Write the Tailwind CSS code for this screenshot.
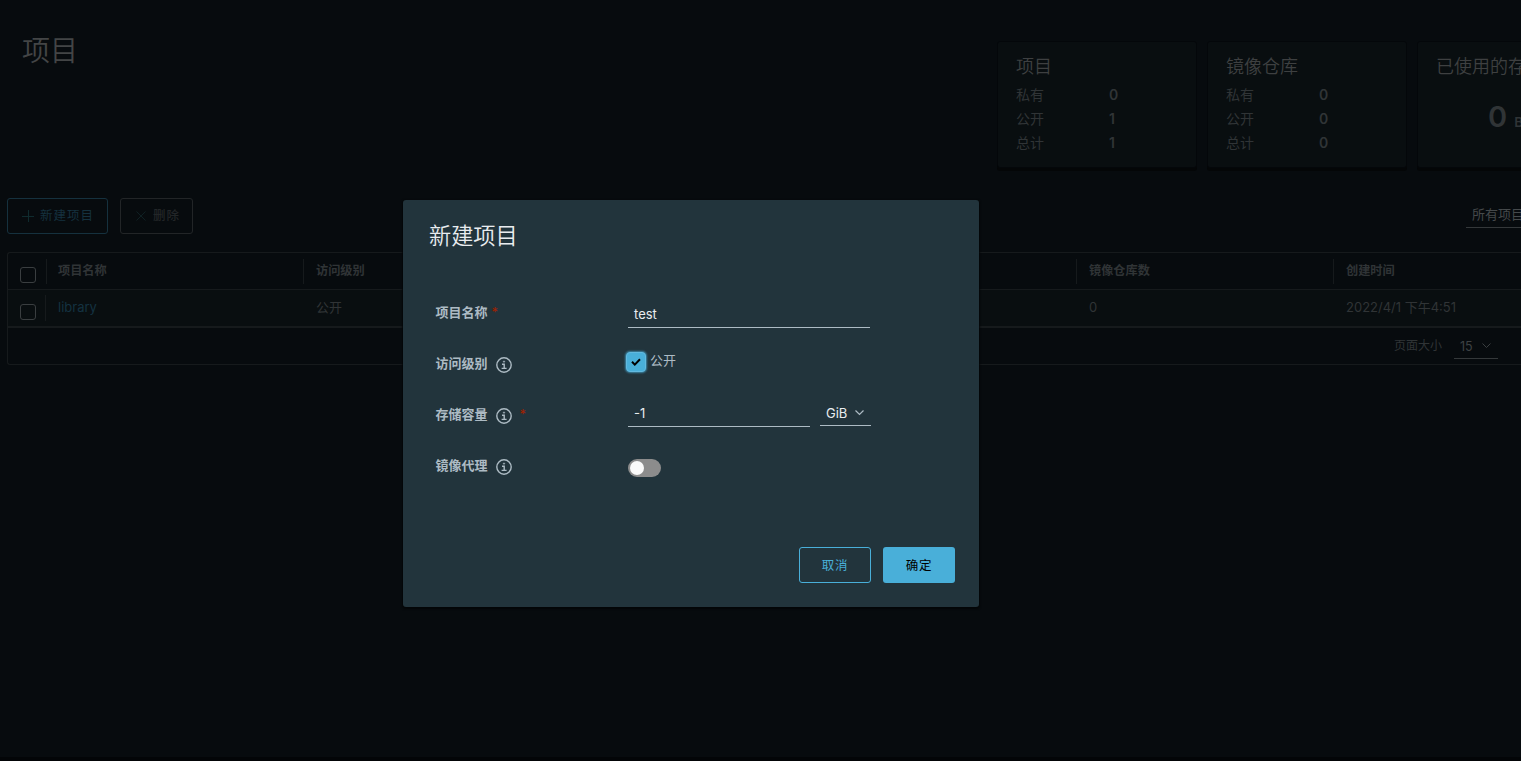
<!DOCTYPE html>
<html lang="zh-CN">
<head>
    <meta charset="UTF-8">
    <meta name="viewport" content="width=device-width, initial-scale=1.0">
    <title>项目</title>
    <script src="https://cdn.jsdelivr.net/npm/@tailwindcss/browser@4"></script>
</head>
<body class="h-screen overflow-hidden bg-[#070b0e] font-['Inter','Noto_Sans_CJK_SC',sans-serif] text-[13px] text-[#303436]">
    <div class="flex h-screen flex-col overflow-hidden border-b-4 border-[#030507] pl-[7px]">
        <!-- title and statistics -->
        <header class="flex h-[198px] shrink-0 items-start justify-between">
            <h1 class="pt-[31px] pl-[15px] text-[28px] leading-10 font-[350] text-[#434546]">项目</h1>
            <div class="flex w-[524px] shrink-0 gap-[10px] overflow-hidden pt-[41px] pb-1">
                <div class="h-[127px] w-[200px] shrink-0 rounded-[3px] border border-[#04070a] bg-[#090e10] pt-[13px] pl-[18px] shadow-[0_3px_0_#040607]">
                    <h2 class="text-lg leading-6 font-[350] text-[#3e4041]">项目</h2>
                    <dl class="grid grid-cols-[93px_1fr] pt-1 text-sm leading-6">
                        <dt>私有</dt><dd class="font-semibold">0</dd>
                        <dt>公开</dt><dd class="font-semibold">1</dd>
                        <dt>总计</dt><dd class="font-semibold">1</dd>
                    </dl>
                </div>
                <div class="h-[127px] w-[200px] shrink-0 rounded-[3px] border border-[#04070a] bg-[#090e10] pt-[13px] pl-[18px] shadow-[0_3px_0_#040607]">
                    <h2 class="text-lg leading-6 font-[350] text-[#3e4041]">镜像仓库</h2>
                    <dl class="grid grid-cols-[93px_1fr] pt-1 text-sm leading-6">
                        <dt>私有</dt><dd class="font-semibold">0</dd>
                        <dt>公开</dt><dd class="font-semibold">0</dd>
                        <dt>总计</dt><dd class="font-semibold">0</dd>
                    </dl>
                </div>
                <div class="h-[127px] w-[200px] shrink-0 rounded-[3px] border border-[#04070a] bg-[#090e10] pt-[13px] pl-[18px] whitespace-nowrap shadow-[0_3px_0_#040607]">
                    <h2 class="text-lg leading-6 font-[350] text-[#3e4041]">已使用的存储</h2>
                    <div class="flex items-baseline gap-[7px] pt-[18px] pl-[52px] font-semibold">
                        <span class="text-[29px] leading-10">0</span>
                        <span class="text-[13.5px]">Byte</span>
                    </div>
                </div>
            </div>
        </header>

        <!-- actions -->
        <div class="flex h-[54px] shrink-0 items-start justify-between">
            <div class="flex gap-3 tracking-[1px]">
                <button class="flex h-9 w-[101px] items-center rounded-[3px] border border-[#15313e] pl-[14px] text-[12.5px] text-[#15313e]">
                    <svg class="mr-[6px] size-3 shrink-0" viewBox="0 0 12 12" fill="none" stroke="#0f2b2e"><path d="M6.5 0v12M0 6.5h12"/></svg>
                    <span class="pt-px whitespace-nowrap">新建项目</span>
                </button>
                <button class="flex h-9 w-[73px] items-center rounded-[3px] border border-[#222527] pl-[15px] text-[12.5px] font-medium text-[#232628]">
                    <svg class="mr-[7px] size-[10px] shrink-0" viewBox="0 0 10 10" fill="none" stroke="#12262a" stroke-width=".8"><path d="M.5.5l9 9M9.5.5l-9 9"/></svg>
                    <span class="pt-px whitespace-nowrap">删除</span>
                </button>
            </div>
            <div class="mt-[6px] h-6 w-[55px] overflow-hidden border-b border-[#34383a] pl-[6px] leading-[21px] whitespace-nowrap text-[#45494b]">所有项目</div>
        </div>

        <!-- project list -->
        <div class="h-[113px] shrink-0 overflow-hidden rounded-l-[3px] border border-r-0 border-[#161a1c]">
            <div class="flex h-[37px] items-start border-b border-[#161a1c] pt-[6px] text-[12.2px] leading-6 font-bold">
                <div class="flex h-[25px] w-[39px] shrink-0 border-r border-[#161a1c] pt-2 pl-3">
                    <span class="size-4 rounded-[3px] border border-[#3a3e40]"></span>
                </div>
                <div class="h-[25px] w-[257px] shrink-0 border-r border-[#161a1c] pl-[11px]">项目名称</div>
                <div class="h-[25px] w-[773px] shrink-0 border-r border-[#161a1c] pl-3">访问级别</div>
                <div class="h-[25px] w-[257px] shrink-0 border-r border-[#161a1c] pl-3">镜像仓库数</div>
                <div class="h-[25px] pl-3 whitespace-nowrap">创建时间</div>
            </div>
            <div class="flex h-[38px] items-start border-b-2 border-[#161a1c] bg-[#090e10] pt-[5px] leading-[25px]">
                <div class="flex h-[26px] w-[38px] shrink-0 border-r border-[#161a1c] pt-[9px] pl-3">
                    <span class="size-4 rounded-[3px] border border-[#3a3e40]"></span>
                </div>
                <div class="w-[258px] shrink-0 pl-3 text-[#143241]">library</div>
                <div class="w-[773px] shrink-0 pl-3">公开</div>
                <div class="w-[257px] shrink-0 pl-3">0</div>
                <div class="pl-3 whitespace-nowrap">2022/4/1 下午4:51</div>
            </div>
            <div class="flex h-9 items-start justify-end pr-[23px]">
                <span class="pr-3 text-[12px] leading-9">页面大小</span>
                <div class="mt-[6px] flex h-[25px] w-11 items-center border-b border-[#34383a] pt-[2px] pl-[6px] text-[12.5px] text-[#3e4244]">
                    15
                    <svg class="mb-[3px] ml-[9px] h-[6px] w-[9px]" viewBox="0 0 9 6" fill="none" stroke="#3a3e40"><path d="M.5.5l4 4 4-4"/></svg>
                </div>
            </div>
        </div>
    </div>

    <!-- new project dialog -->
    <div class="absolute top-[200px] left-[403px] flex h-[407px] w-[576px] flex-col rounded-[3px] bg-[#22343c] pr-6 pb-6 pl-[26px] text-[#adbbc4] shadow-[0_1px_2px_1px_#040608]">
        <h3 class="pt-[21px] text-[22.2px] leading-[30px] font-[350] text-[#e9ecef]">新建项目</h3>
        <form class="flex flex-1 flex-col pt-[44px] pl-[6.5px]">
            <div class="flex h-[51px] items-start">
                <label class="flex w-[192.5px] pt-[7px] leading-5 font-bold">项目名称<span class="pl-1 font-normal text-[#a32100]">*</span></label>
                <div class="mt-[7px] h-[26px] w-[242px] border-b border-[#adbbc4] pl-[6px] leading-[25px] text-[#e9ecef]">test</div>
            </div>
            <div class="flex h-[51px] items-start">
                <label class="flex w-[190.5px] pt-[7px] leading-5 font-bold">访问级别
                    <svg class="mt-1 ml-2 size-4" viewBox="0 0 16 16" fill="none" stroke="#adbbc4" stroke-width="1.4"><circle cx="8" cy="8" r="7.2"/><path d="M6 7.2h2.2v4M5.6 11.4h5"/><circle cx="8" cy="4.6" r=".7" fill="#adbbc4" stroke-width=".6"/></svg>
                </label>
                <span class="mt-[6px] flex size-5 items-center justify-center rounded-[4px] border border-[#62b9df] bg-[#49afd9] shadow-[0_0_2px_1px_#49afd9aa]">
                    <svg class="h-2 w-[10px]" viewBox="0 0 10 8" fill="none" stroke="#000" stroke-width="2"><path d="M1 3.8l2.8 2.8L9 1.2"/></svg>
                </span>
                <span class="pt-1 pl-1 leading-5">公开</span>
            </div>
            <div class="flex h-[51px] items-start">
                <label class="flex w-[192.5px] pt-[7px] leading-5 font-bold">存储容量
                    <svg class="mt-1 ml-2 size-4" viewBox="0 0 16 16" fill="none" stroke="#adbbc4" stroke-width="1.4"><circle cx="8" cy="8" r="7.2"/><path d="M6 7.2h2.2v4M5.6 11.4h5"/><circle cx="8" cy="4.6" r=".7" fill="#adbbc4" stroke-width=".6"/></svg>
                    <span class="pl-2 font-normal text-[#a32100]">*</span>
                </label>
                <div class="mt-1 h-[26px] w-[182px] border-b border-[#adbbc4] pl-[6px] leading-[25px] text-[#e9ecef]">-1</div>
                <div class="mt-1 ml-[10px] flex h-[25px] w-[51px] items-center border-b border-[#adbbc4] pl-[6px] text-[#e9ecef]">
                    <span class="pt-[2px]">GiB</span>
                    <svg class="ml-2 h-[6px] w-[9px]" viewBox="0 0 9 6" fill="none" stroke="#adbbc4" stroke-width="1.2"><path d="M.5.5l4 4 4-4"/></svg>
                </div>
            </div>
            <div class="flex h-[51px] items-start">
                <label class="flex w-[192.5px] pt-[7px] leading-5 font-bold">镜像代理
                    <svg class="mt-1 ml-2 size-4" viewBox="0 0 16 16" fill="none" stroke="#adbbc4" stroke-width="1.4"><circle cx="8" cy="8" r="7.2"/><path d="M6 7.2h2.2v4M5.6 11.4h5"/><circle cx="8" cy="4.6" r=".7" fill="#adbbc4" stroke-width=".6"/></svg>
                </label>
                <span class="mt-[11px] flex h-[18px] w-[33px] items-center rounded-full bg-[#8c8c8c] pl-[2px]">
                    <span class="size-[14px] rounded-full bg-[#fafafa]"></span>
                </span>
            </div>
        </form>
        <div class="flex justify-end gap-3 text-[12.5px] tracking-[0.8px]">
            <button class="h-9 w-[72px] rounded-[3px] border border-[#49afd9] pt-[2px] text-[#49afd9]">取消</button>
            <button class="h-9 w-[72px] rounded-[3px] bg-[#49afd9] pt-[2px] text-black">确定</button>
        </div>
    </div>
</body>
</html>
